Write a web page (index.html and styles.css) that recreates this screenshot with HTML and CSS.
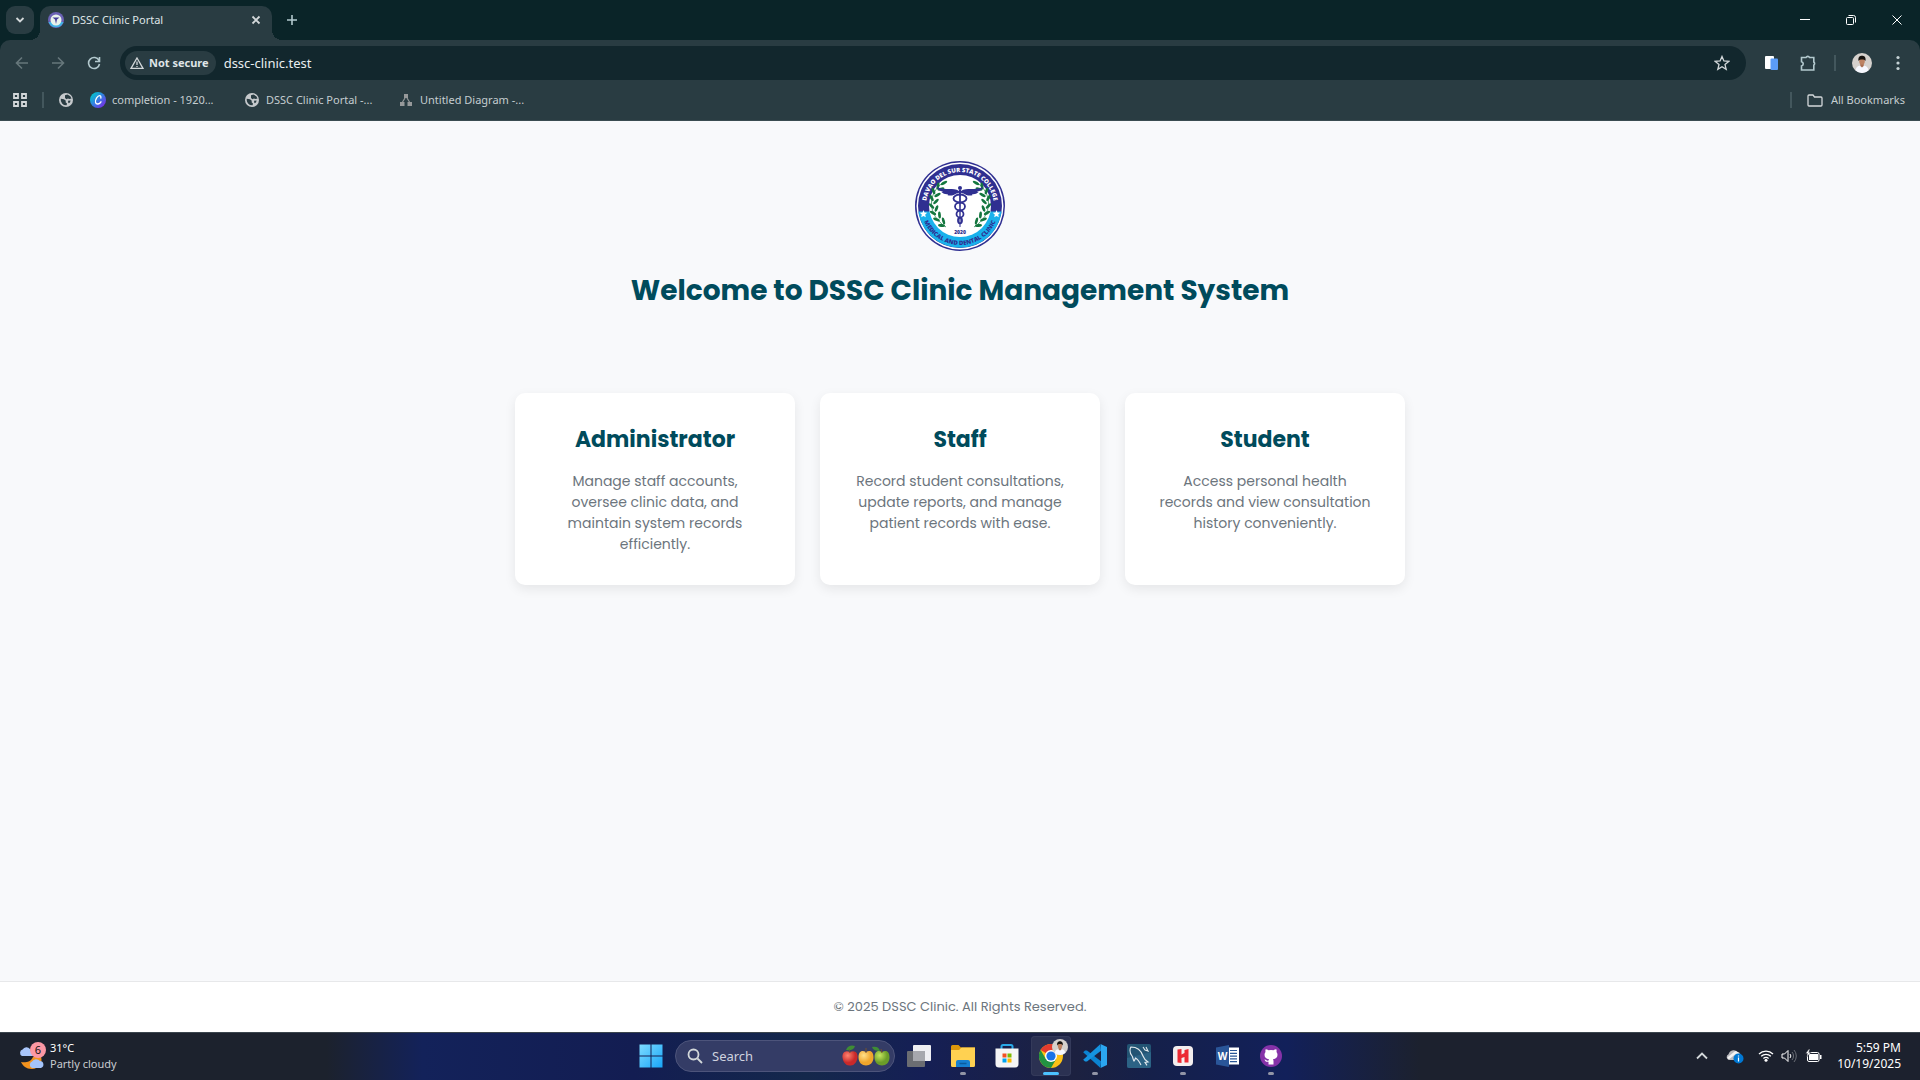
FILE: index.html
```html
<!DOCTYPE html>
<html lang="en">
<head>
<meta charset="utf-8">
<meta name="viewport" content="width=device-width, initial-scale=1">
<title>DSSC Clinic Portal</title>
<link rel="stylesheet" href="styles.css">
</head>
<body>
<svg class="defs" aria-hidden="true">
  <defs>
    <symbol id="globe" viewBox="0 0 14 14">
      <circle cx="7" cy="7" r="7" fill="#c5c9cc"/>
      <path d="M1.800 5.800 5 6.200 6.800 7.800 6.600 9.200 8 10.400 7.600 12.300A5.500 5.500 0 0 1 1.800 5.800ZM6 2.200l2.500-.6 2.800 1.600 1.200 2.200L10.500 6l-1.600-.6L7.500 6.200 6 5Z" fill="#293c42"/>
      <path d="M9 7.800l2.600-.4-.6 2.200-1.600.6Z" fill="#293c42"/>
    </symbol>
    <symbol id="person" viewBox="0 0 20 20">
      <circle cx="10" cy="10" r="10" fill="#d5d1cd"/>
      <path d="M3.500 17.500c.5-4 3-5 6.500-5s6 1 6.500 5A10 10 0 0 1 3.500 17.500Z" fill="#f6f8ff"/>
      <path d="M8.300 10h3.400v3L10 14.500 8.300 13Z" fill="#a96d50"/>
      <ellipse cx="10" cy="8" rx="2.800" ry="3.800" fill="#bd8262"/>
      <path d="M6.500 8C5.800 4 8 2.800 10 2.800S14.200 4 13.500 8C12.800 6.800 11.500 6.400 10 6.400S7.200 6.800 6.500 8Z" fill="#17130f"/>
    </symbol>
  </defs>
</svg>

<header class="browser">
  <div class="tab-strip">
    <button class="tab-search" aria-label="Search tabs">
      <svg width="10" height="10" viewBox="0 0 10 10"><path d="M1.500 3 5 6.500 8.500 3" class="line bold"/></svg>
    </button>
    <div class="tab">
      <svg width="16" height="16" viewBox="0 0 16 16"><circle cx="8" cy="8" r="8" fill="#6b62b5"/><path d="M0.500 10A8 8 0 0 0 15.500 10Z" fill="#3fb3e6"/><circle cx="8" cy="8" r="5.500" fill="#e8f3ec"/><path d="M4.500 5.500h7L9 7.500 8 12 7 7.500Z" fill="#453d9b"/></svg>
      <span class="tab-title">DSSC Clinic Portal</span>
      <button class="icon-button tab-close" aria-label="Close tab"><svg width="10" height="10" viewBox="0 0 10 10"><path d="M1.500 1.500l7 7M8.500 1.500l-7 7" class="line bold"/></svg></button>
    </div>
    <button class="icon-button new-tab" aria-label="New tab"><svg width="12" height="12" viewBox="0 0 12 12"><path d="M6 1v10M1 6h10" class="line tint"/></svg></button>
    <div class="window-controls">
      <button aria-label="Minimize"><svg width="10" height="10" viewBox="0 0 10 10"><path d="M0 4.500h10" class="line thin"/></svg></button>
      <button aria-label="Restore"><svg width="10" height="10" viewBox="0 0 10 10"><rect x=".5" y="2.500" width="7" height="7" rx="1" class="line thin"/><path d="M2.500.5H7.500A2 2 0 0 1 9.500 2.500V7.500" class="line thin"/></svg></button>
      <button aria-label="Close"><svg width="10" height="10" viewBox="0 0 10 10"><path d="M.5.5l9 9M9.500.5l-9 9" class="line thin"/></svg></button>
    </div>
  </div>

  <div class="toolbar">
    <nav class="history" aria-label="History">
      <button class="icon-button" aria-label="Back" disabled><svg width="14" height="14" viewBox="0 0 14 14"><path d="M13 7H1.500M7 1.500 1.500 7 7 12.500" class="line muted"/></svg></button>
      <button class="icon-button" aria-label="Forward" disabled><svg width="14" height="14" viewBox="0 0 14 14"><path d="M1 7h11.500M7 1.500 12.500 7 7 12.500" class="line muted"/></svg></button>
      <button class="icon-button" aria-label="Reload"><svg width="14" height="14" viewBox="0 0 14 14"><path d="M12 4.500A5.500 5.500 0 1 0 12.500 8M12.500 1v4.500H8" class="line tint"/></svg></button>
    </nav>
    <div class="address">
      <button class="security"><svg width="14" height="12" viewBox="0 0 14 12"><path d="M7 1 13 11.300H1Z" class="line"/><path d="M7 4.500v3.500M7 9v1" class="line"/></svg>Not secure</button>
      <input class="url" type="text" aria-label="Address" value="dssc-clinic.test">
      <button class="icon-button" aria-label="Bookmark this tab"><svg width="16" height="16" viewBox="0 0 16 16"><path d="M8 1.500 9.900 6l4.800.4-3.700 3.200 1.200 4.800L8 11.800l-4.200 2.600L5 9.600 1.300 6.400 6.100 6Z" class="line"/></svg></button>
    </div>
    <div class="extensions">
      <button class="icon-button" aria-label="Reader extension"><svg width="14" height="16" viewBox="0 0 14 16"><rect x="0" y="1" width="9" height="13" rx="1" fill="#fff"/><rect x="5.500" y="3.500" width="7.500" height="11.500" rx="1" fill="#5b9cf8"/></svg></button>
      <button class="icon-button" aria-label="Extensions"><svg width="17" height="17" viewBox="0 0 17 17"><path d="M1.500 2.500H6a2 2 0 0 1 3.600 0h4.200V7a2 2 0 0 1 0 3.200v4.800H1.500v-4a2.200 2.200 0 0 0 0-4.300Z" class="line tint"/></svg></button>
      <span class="divider"></span>
      <button class="icon-button profile" aria-label="Profile"><svg width="20" height="20"><use href="#person"/></svg></button>
      <button class="icon-button" aria-label="Menu"><svg width="4" height="16" viewBox="0 0 4 16" fill="#c5d2d5"><circle cx="2" cy="2.500" r="1.600"/><circle cx="2" cy="8" r="1.600"/><circle cx="2" cy="13.500" r="1.600"/></svg></button>
    </div>
  </div>

  <nav class="bookmarks" aria-label="Bookmarks">
    <button class="icon-button apps" aria-label="Apps"><svg width="14" height="14" viewBox="0 0 14 14"><path d="M1 1h4v4H1ZM9 1h4v4H9ZM1 9h4v4H1ZM9 9h4v4H9Z" class="line bold"/></svg></button>
    <span class="divider"></span>
    <a class="bookmark plain" href="#" aria-label="Website"><svg width="14" height="14"><use href="#globe"/></svg></a>
    <a class="bookmark completion" href="#"><svg width="16" height="16" viewBox="0 0 16 16"><defs><linearGradient id="canva" x1="0" y1="0" x2="1" y2="1"><stop offset=".15" stop-color="#06bfcf"/><stop offset=".55" stop-color="#3e73e4"/><stop offset=".9" stop-color="#7b2be5"/></linearGradient></defs><circle cx="8" cy="8" r="8" fill="url(#canva)"/><path d="M10.800 6C11.500 3 8.500 2.800 6.500 6.200S5.500 12.300 8 12c1.400-.2 2.300-1 3-2.200" fill="none" stroke="#fff" stroke-width="1.300" stroke-linecap="round"/></svg>completion - 1920...</a>
    <a class="bookmark portal" href="#"><svg width="14" height="14"><use href="#globe"/></svg>DSSC Clinic Portal -...</a>
    <a class="bookmark diagram" href="#"><svg width="12" height="12" viewBox="0 0 12 12" fill="#96999a"><rect x="4" y="0" width="4" height="4"/><rect x="0" y="8" width="4.500" height="4"/><rect x="7.500" y="8" width="4.500" height="4"/><path d="M5 4 2.500 8M7 4 9.500 8" stroke="#96999a" stroke-width="1.200"/></svg>Untitled Diagram -...</a>
    <span class="divider last"></span>
    <a class="bookmark all" href="#"><svg width="16" height="13" viewBox="0 0 16 13"><path d="M1 2a1 1 0 0 1 1-1h4l1.500 2H14a1 1 0 0 1 1 1v7a1 1 0 0 1-1 1H2a1 1 0 0 1-1-1Z" class="line"/></svg>All Bookmarks</a>
  </nav>
</header>

<main class="page">
  <div class="hero">
    <svg class="seal" viewBox="0 0 90 90" role="img" aria-label="Davao del Sur State College Medical and Dental Clinic">
      <defs>
        <path id="arc-top" d="M19 66.900A34 34 0 1 1 71 66.900"/>
        <path id="arc-bottom" d="M6 45A39 39 0 0 0 84 45"/>
        <g id="laurel" fill="#14773f">
          <path d="M29 21C12 32 12 54 31 66" fill="none" stroke="#14773f" stroke-width=".7"/>
          <ellipse cx="29" cy="22" rx="3.600" ry="1.300" transform="rotate(-30 29 22)"/>
          <ellipse cx="23" cy="25" rx="3.500" ry="1.400" transform="rotate(-80 23 25)"/>
          <ellipse cx="26" cy="28" rx="3.500" ry="1.400" transform="rotate(-15 26 28)"/>
          <ellipse cx="18.500" cy="30" rx="3.500" ry="1.400" transform="rotate(70 18.500 30)"/>
          <ellipse cx="22.500" cy="34" rx="3.500" ry="1.400" transform="rotate(-30 22.500 34)"/>
          <ellipse cx="16.500" cy="37" rx="3.500" ry="1.400" transform="rotate(60 16.500 37)"/>
          <ellipse cx="21" cy="40.500" rx="3.500" ry="1.400" transform="rotate(-45 21 40.500)"/>
          <ellipse cx="16.500" cy="45" rx="3.500" ry="1.400" transform="rotate(45 16.500 45)"/>
          <ellipse cx="21.500" cy="47.500" rx="3.500" ry="1.400" transform="rotate(-70 21.500 47.500)"/>
          <ellipse cx="18" cy="52" rx="3.500" ry="1.400" transform="rotate(30 18 52)"/>
          <ellipse cx="24.500" cy="54" rx="3.500" ry="1.400" transform="rotate(-95 24.500 54)"/>
          <ellipse cx="21.500" cy="58.500" rx="3.500" ry="1.400" transform="rotate(20 21.500 58.500)"/>
          <ellipse cx="28.500" cy="60" rx="3.500" ry="1.400" transform="rotate(75 28.500 60)"/>
          <ellipse cx="26.500" cy="64.500" rx="3.500" ry="1.400" transform="rotate(10 26.500 64.500)"/>
        </g>
      </defs>
      <circle cx="45" cy="45" r="45" fill="#2f2f91"/>
      <circle cx="45" cy="45" r="43.500" fill="#fff"/>
      <circle cx="45" cy="45" r="42" fill="#2f2f91"/>
      <path d="M3.400 50.500A42 42 0 0 0 86.600 50.500Z" fill="#19b1ec"/>
      <circle cx="45" cy="45" r="31" fill="#fff"/>
      <path class="star" d="m8.500 49 1 2.600 2.800.2-2.100 1.800.6 2.700-2.300-1.400-2.300 1.400.6-2.700-2.100-1.800 2.800-.2Z"/>
      <path class="star" d="m81.500 49 1 2.600 2.800.2-2.100 1.800.6 2.700-2.300-1.400-2.300 1.400.6-2.700-2.100-1.800 2.800-.2Z"/>
      <text class="seal-name"><textPath href="#arc-top" startOffset="50%">DAVAO DEL SUR STATE COLLEGE</textPath></text>
      <text class="seal-unit"><textPath href="#arc-bottom" startOffset="50%">MEDICAL AND DENTAL CLINIC</textPath></text>
      <use href="#laurel"/>
      <use href="#laurel" transform="translate(90 0) scale(-1 1)"/>
      <g fill="#2f2f91">
        <path d="M44 30C38 26 31 30 22 26c1 3 4 4.500 6 4.500-.6.500-1.500.5-1.500.5 2 2 4.500 2.400 6.500 2l-.8 1c3 1.200 6.800.4 9.300-1.500L45 31.500l3.500 1C51 34.400 54.800 35.200 57.800 34l-.8-1c2 .4 4.500 0 6.500-2 0 0-.9 0-1.500-.5 2 0 5-1.500 6-4.500-9 4-16 0-22 4Z"/>
        <circle cx="45" cy="27" r="2"/>
        <path d="M44 29h2l-.5 37h-1Z"/>
      </g>
      <g fill="none" stroke="#2f2f91" stroke-width="1.800">
        <ellipse cx="45" cy="37.500" rx="6.500" ry="4"/>
        <ellipse cx="45" cy="45.500" rx="5" ry="3.800"/>
        <ellipse cx="45" cy="53" rx="3.500" ry="3.500"/>
        <ellipse cx="45" cy="59.500" rx="2" ry="2.800"/>
      </g>
      <text class="seal-year" x="45" y="72.500">2020</text>
    </svg>
    <h1>Welcome to DSSC Clinic Management System</h1>
  </div>
  <div class="cards">
    <section class="card"><h2>Administrator</h2><p>Manage staff accounts, oversee clinic data, and maintain system records efficiently.</p></section>
    <section class="card"><h2>Staff</h2><p>Record student consultations, update reports, and manage patient records with ease.</p></section>
    <section class="card"><h2>Student</h2><p>Access personal health records and view consultation history conveniently.</p></section>
  </div>
</main>

<footer class="site-footer">© 2025 DSSC Clinic. All Rights Reserved.</footer>

<div class="taskbar">
  <button class="weather">
    <svg width="28" height="28" viewBox="0 0 28 28">
      <path d="M3 20c4 1 10 0 12-5h8c2 5-2 12-9 12C8 27 5 24 3 20Z" fill="#f3931e"/>
      <path d="M4 14a3.500 3.500 0 0 1 .6-6.500A4.500 4.500 0 0 1 12 7l3 7Z" fill="#a9c6fa"/>
      <path d="M14 26a3.500 3.500 0 0 1 0-6.500 5 5 0 0 1 8-.5 3.600 3.600 0 0 1 1 7Z" fill="#a4c4fb"/>
      <circle cx="20" cy="8" r="8" fill="#fb98a3"/>
      <text class="badge-count" x="20" y="12">6</text>
    </svg>
    <span><span class="temperature">31°C</span><br>Partly cloudy</span>
  </button>

  <div class="apps-row">
    <button class="app" aria-label="Start"><svg width="24" height="24" viewBox="0 0 24 24"><defs><linearGradient id="win" x1="0" y1="0" x2="1" y2="1"><stop stop-color="#7edcff"/><stop offset="1" stop-color="#18a5f8"/></linearGradient></defs><path d="M.5.500h11v11H.5ZM12.500.5h11v11h-11ZM.5 12.500h11v11H.5ZM12.500 12.500h11v11h-11Z" fill="url(#win)"/></svg></button>
    <label class="search">
      <svg width="16" height="16" viewBox="0 0 16 16"><circle cx="6.500" cy="6.500" r="5" class="line bold"/><path d="m10.500 10.500 4.500 4.500" class="line bold"/></svg>
      <input type="text" placeholder="Search" aria-label="Search">
      <svg width="48" height="22" viewBox="0 0 48 22">
        <defs>
          <radialGradient id="red" cx=".35" cy=".3"><stop stop-color="#ff8370"/><stop offset="1" stop-color="#c9292a"/></radialGradient>
          <radialGradient id="yellow" cx=".35" cy=".3"><stop stop-color="#ffe08a"/><stop offset="1" stop-color="#f0a52b"/></radialGradient>
          <radialGradient id="green" cx=".35" cy=".3"><stop stop-color="#c5e65e"/><stop offset="1" stop-color="#6b9d28"/></radialGradient>
        </defs>
        <path d="M8 7C3 4.500 0 8 .5 12.500S4 21 8 20.500c4 .5 7-3.500 7.500-8S13 4.500 8 7Z" fill="url(#red)"/>
        <path d="M24 7c-5-2.500-7.500.500-7.500 5.500S20 20.500 24 20.500s7.500-3 7.500-8S29 4.500 24 7Z" fill="url(#yellow)"/>
        <path d="M40 7c-5-2.500-7.500.500-7.500 5.500S36 20.500 40 20.500s7.500-3 7.500-8S45 4.500 40 7Z" fill="url(#green)"/>
        <path d="M4 5C6 0 10 0 13 1c-1 4-5 5-9 4ZM30 2c4-1 7 0 8 4-4 0-7-1-8-4Z" fill="#3f8c35"/>
        <path d="m8 8-.6-3.500M24 8V3M40 8l-1-4" stroke="#74502a" fill="none"/>
      </svg>
    </label>
    <button class="app" aria-label="Task view"><svg width="24" height="22" viewBox="0 0 24 22"><rect y="6" width="18" height="16" rx="1" fill="#6b6d72"/><rect x="6" width="18" height="16" rx="1" fill="#eeeef2"/><path d="M6 6h12v10H6Z" fill="#a6a7ad"/></svg></button>
    <button class="app running" aria-label="File Explorer"><svg width="24" height="22" viewBox="0 0 24 22"><path d="M0 1.500A1.500 1.500 0 0 1 1.500 0h6L10 2.500h14V8H0Z" fill="#dd970b"/><path d="M0 5h8l2.500-2.500H24V20.500a1.500 1.500 0 0 1-1.500 1.500h-21A1.500 1.500 0 0 1 0 20.500Z" fill="#ffd151"/><path d="M5 22v-5a2 2 0 0 1 2-2h10a2 2 0 0 1 2 2v5Z" fill="#1680d1"/><path d="M8.500 18.500h7" stroke="#0b5c9e" stroke-width="1.500"/></svg></button>
    <button class="app" aria-label="Microsoft Store"><svg width="24" height="24" viewBox="0 0 24 24"><path d="M6.500 5V2.500a1.500 1.500 0 0 1 1.500-1.500h8a1.500 1.500 0 0 1 1.500 1.500V5" fill="none" stroke="#29a9e8" stroke-width="2"/><path d="M.5 4.500h23V20a3.500 3.500 0 0 1-3.500 3.500H4A3.500 3.500 0 0 1 .5 20Z" fill="#f5f5f5"/><path d="M7.500 9.500h4v4h-4Z" fill="#f25022"/><path d="M12.500 9.500h4v4h-4Z" fill="#7fba00"/><path d="M7.500 14.500h4v4h-4Z" fill="#00a4ef"/><path d="M12.500 14.500h4v4h-4Z" fill="#ffb900"/></svg></button>
    <button class="app running active" aria-label="Google Chrome">
      <svg width="24" height="24" viewBox="0 0 24 24"><circle cx="12" cy="12" r="12" fill="#fbc116"/><path d="M12 12 1.600 6A12 12 0 0 1 22.400 6H12Z" fill="#e33b2e"/><path d="M1.600 6A12 12 0 0 0 12 24l5.200-9L12 12 6.800 15Z" fill="#229342"/><circle cx="12" cy="12" r="6" fill="#fff"/><circle cx="12" cy="12" r="4.600" fill="#1a73e8"/></svg>
      <svg class="app-badge" width="16" height="16" viewBox="0 0 20 20"><use href="#person" width="20" height="20"/></svg>
    </button>
    <button class="app running" aria-label="Visual Studio Code"><svg width="24" height="24" viewBox="0 0 24 24"><path d="M.2 8.200 2 6.500 4 6.600 18 17.300 17.500 24Z" fill="#0b83d1"/><path d="M.2 15.800 17.500 0 18 6.700 4 17.400l-2 .1Z" fill="#1593e0"/><path d="m17.500 0 6.500 3v18l-6.500 3c.4-.4.5-.7.5-1.200V1.200c0-.5-.1-.8-.5-1.200Z" fill="#2ba6f0"/></svg></button>
    <button class="app" aria-label="MySQL Workbench"><svg width="24" height="24" viewBox="0 0 24 24"><rect width="24" height="24" rx="2" fill="#225473"/><path d="M0 14 24 8v14a2 2 0 0 1-2 2H2a2 2 0 0 1-2-2Z" fill="#2c6385"/><path d="M5 12C2 8 3 4 4 3c5 0 10 3 12 9 1 3 2 4 5 6l-3 .4 2 3M5 12c1 1 1 4 2 5 1-1 1-2 1.500-3 2 1 4 4 5.500 7M16 3l2 3 3 1-2-4" fill="none" stroke="#e2e9ee" stroke-width="1.100"/></svg></button>
    <button class="app running" aria-label="HeidiSQL"><svg width="20" height="20" viewBox="0 0 20 20"><rect width="20" height="20" rx="4" fill="#f3eeee"/><path d="M4.500 3.500 8.500 3v5.500l3-1.500V4L15.500 3v13.500h-4V11l-3 1v5l-4-.5Z" fill="#ec2932"/></svg></button>
    <button class="app" aria-label="Word"><svg width="23" height="22" viewBox="0 0 23 22"><path d="M12 2.500h11v17H12Z" fill="#fff"/><path d="M14 5.500h7M14 8.300h7M14 11.100h7M14 13.900h7M14 16.700h7" stroke="#2b5797" stroke-width="1.200"/><path d="M0 2.500 13 0v22L0 19.500Z" fill="#2a5699"/><text class="word-letter" x="6.500" y="14.500">W</text></svg></button>
    <button class="app running" aria-label="GitHub Desktop"><svg width="22" height="22" viewBox="0 0 22 22"><circle cx="11" cy="11" r="11" fill="#8532a8"/><path d="M8.500 19.500v-2.800c-3 .6-3.500-1.200-4-2 1.500-.5 1.800 1.600 4 .8l.5-1.300c-3-.4-4.500-1.800-4.500-4.500 0-1.200.4-2.100 1-2.800-.2-.8-.2-1.700.2-2.700 1 0 2 .5 2.800 1.100a9 9 0 0 1 5 0c.8-.6 1.800-1.100 2.800-1.100.4 1 .4 1.900.2 2.700.6.7 1 1.600 1 2.800 0 2.700-1.500 4.100-4.500 4.500.4.600.5 1.200.5 2v3.300Z" fill="#fff"/></svg></button>
  </div>

  <div class="tray">
    <button class="icon-button" aria-label="Show hidden icons"><svg width="12" height="8" viewBox="0 0 12 8"><path d="M1 6.500 6 1.500l5 5" class="line bold"/></svg></button>
    <button class="icon-button cloud" aria-label="OneDrive"><svg width="18" height="16" viewBox="0 0 18 16"><path d="M3 12A3 3 0 0 1 2.500 6.300 5.500 5.500 0 0 1 12.500 5c2 .4 3 2 3 4l-4 3Z" fill="#b9b9bd"/><path d="M2 10.500 9.500 4.500 13 6" stroke="#f3f3f3" stroke-width="2.500" fill="none"/><circle cx="12.500" cy="10.500" r="5" fill="#0078d4"/><path d="M12.500 9.500v4M12.500 7.500v1" stroke="#fff" stroke-width="1.200"/></svg></button>
    <button class="system" aria-label="Network, sound and battery">
      <svg width="16" height="13" viewBox="0 0 16 13"><path d="M1 5a10 10 0 0 1 14 0M3.200 7.300a7 7 0 0 1 9.600 0M5.400 9.500a4 4 0 0 1 5.200 0" class="line wifi"/><circle cx="8" cy="11.300" r="1.500" fill="#fff"/></svg>
      <svg width="17" height="14" viewBox="0 0 17 14"><path d="M1 5h2.500L7 1.500v11L3.500 9H1Z" class="line thin"/><path d="M9 5a3 3 0 0 1 0 4" class="line thin"/><path d="M11 3a6 6 0 0 1 0 8M13 1a9 9 0 0 1 0 12" class="line faint"/></svg>
      <svg width="17" height="14" viewBox="0 0 17 14"><rect x="2.500" y="3.500" width="11.500" height="9" rx="1.500" class="line thin"/><path d="M4 5h9v6H4ZM15 6h1.500v4H15Z" fill="#fff"/><path d="M4 0 .5 4.500h2L1.500 8 6 3.500H3.800L5 0Z" fill="#fff" stroke="#1c212e" stroke-width=".5"/></svg>
    </button>
    <button class="clock">5:59 PM<br>10/19/2025</button>
  </div>
</div>
</body>
</html>
```
FILE: styles.css
```css
* {
  box-sizing: border-box;
}

body {
  margin: 0;
  min-height: 100vh;
  display: flex;
  flex-direction: column;
  background: #f8f9fb;
  font-family: Poppins, Inter, "Noto Sans", sans-serif;
}

h1, h2, p {
  margin: 0;
}

button, input {
  border: 0;
  padding: 0;
  background: none;
  color: inherit;
  font: inherit;
}

a {
  color: inherit;
  text-decoration: none;
}

svg {
  display: block;
  flex: none;
}

.defs {
  position: absolute;
  width: 0;
  height: 0;
}

.line {
  fill: none;
  stroke: #d3d8da;
  stroke-width: 1.3;
}

.line.bold { stroke-width: 1.8; }
.line.thin { stroke: #fff; stroke-width: 1; }
.line.wifi { stroke: #fff; }
.line.tint { stroke: #b3c9ce; stroke-width: 1.6; }
.line.muted { stroke: #66777b; stroke-width: 1.6; }
.line.faint { stroke: #6a6e76; stroke-width: 1; }

.icon-button {
  display: flex;
  align-items: center;
  justify-content: center;
  flex: none;
}

.divider {
  width: 2px;
  height: 16px;
  background: #43575d;
}

/* Browser window */
.browser {
  background: #0a2428;
  color: #dfe5e7;
  font: 12px/16px "Segoe UI", "Noto Sans", sans-serif;
}

.tab-strip {
  height: 40px;
  display: flex;
  align-items: center;
  padding-left: 6px;
}

.tab-search {
  width: 28px;
  height: 28px;
  display: grid;
  place-items: center;
  border-radius: 9px;
  background: #293c42;
}

.tab {
  position: relative;
  align-self: flex-end;
  width: 232px;
  height: 34px;
  margin-left: 6px;
  padding: 0 11px 6px 8px;
  display: flex;
  align-items: center;
  gap: 8px;
  border-radius: 10px 10px 0 0;
  background: #293c42;
}

.tab::before,
.tab::after {
  content: "";
  position: absolute;
  bottom: 0;
  width: 10px;
  height: 10px;
}

.tab::before {
  right: 100%;
  background: radial-gradient(circle at 0 0, transparent 10px, #293c42 10px);
}

.tab::after {
  left: 100%;
  background: radial-gradient(circle at 100% 0, transparent 10px, #293c42 10px);
}

.tab-title {
  flex: 1;
  font-size: 11px;
}

.new-tab {
  width: 28px;
  height: 28px;
  margin-left: 6px;
}

.window-controls {
  display: flex;
  margin-left: auto;
}

.window-controls button {
  width: 46px;
  height: 40px;
  display: grid;
  place-items: center;
}

.toolbar {
  display: flex;
  align-items: center;
  height: 46px;
  padding: 0 4px;
  border-radius: 10px 10px 0 0;
  background: #293c42;
}

.history {
  display: flex;
  margin-right: 8px;
}

.history .icon-button {
  width: 36px;
  height: 34px;
}

.address {
  flex: 1;
  height: 34px;
  display: flex;
  align-items: center;
  padding: 0 16px 0 5px;
  border-radius: 17px;
  background: #12272d;
}

.security {
  height: 24px;
  display: flex;
  align-items: center;
  gap: 5px;
  padding: 0 7px 0 5px;
  border-radius: 12px;
  background: #293c42;
  font-size: 11px;
  font-weight: 700;
}

.url {
  flex: 1;
  min-width: 0;
  margin-left: 8px;
  color: #e8eef0;
  font-size: 13px;
}

.extensions {
  display: flex;
  align-items: center;
  margin-left: 8px;
}

.extensions .icon-button {
  width: 36px;
  height: 34px;
}

.extensions .divider {
  margin: 0 8px;
}

.bookmarks {
  display: flex;
  align-items: center;
  height: 35px;
  padding: 0 15px 6px 13px;
  border-bottom: 1px solid #3a4c51;
  background: #293c42;
  color: #c5cdd0;
  font-size: 11px;
}

.bookmark {
  display: flex;
  align-items: center;
  gap: 7px;
  white-space: nowrap;
}

.bookmarks .divider {
  margin: 0 15px;
}

.bookmark.completion {
  width: 139px;
  gap: 6px;
  margin: 0 16px 0 17px;
}

.bookmark.portal {
  width: 139px;
  margin-right: 16px;
}

.bookmark.diagram,
.bookmark.all {
  gap: 8px;
}

.bookmarks .divider.last {
  margin-left: auto;
}

/* Clinic page */
.page {
  flex: 1;
  display: flex;
  flex-direction: column;
  align-items: center;
  padding: 40px 20px;
}

.hero {
  display: flex;
  flex-direction: column;
  align-items: center;
  gap: 19px;
  text-align: center;
}

.seal {
  width: 90px;
  height: 90px;
}

.seal text {
  font-family: "Open Sans", sans-serif;
  font-weight: 800;
  text-anchor: middle;
}

.seal-name {
  fill: #fff;
  font-size: 6px;
}

.seal-unit {
  fill: #2f2f91;
  font-size: 6px;
}

.seal-year {
  fill: #2f2f91;
  font-size: 5px;
}

.star {
  fill: #fff;
}

h1 {
  color: #004b5c;
  font-size: 28px;
  line-height: 42px;
  font-weight: 700;
}

.cards {
  display: flex;
  flex-wrap: wrap;
  justify-content: center;
  gap: 25px;
  margin-top: 81px;
}

.card {
  width: 280px;
  padding: 30px;
  border-radius: 10px;
  background: #fff;
  box-shadow: 0 4px 12px rgb(0 0 0 / 8%);
  text-align: center;
}

.card h2 {
  margin-bottom: 15px;
  color: #004b5c;
  font-size: 22px;
  line-height: 33px;
  font-weight: 700;
}

.card p {
  color: #6c757d;
  font-size: 14px;
  line-height: 21px;
}

.site-footer {
  padding: 15px;
  border-top: 1px solid #e7e8ea;
  background: #fff;
  color: #6c757d;
  font-size: 13px;
  line-height: 20px;
  text-align: center;
}

/* Desktop taskbar */
.taskbar {
  height: 48px;
  display: grid;
  grid-template-columns: 1fr auto 1fr;
  align-items: center;
  padding: 0 0 2px 2px;
  border-top: 1px solid #3b454d;
  background: linear-gradient(90deg, #1c222d 17%, #13225a 22%, #131d52 33%, #14284b 42%, #151f55 48%, #1c2140 56%, #15204a 60%, #12205a 67%, #1c212e 74%);
  color: #fff;
  font: 12px/16px "Segoe UI", "Noto Sans", sans-serif;
}

.weather {
  justify-self: start;
  display: flex;
  align-items: center;
  gap: 4px;
  padding-left: 16px;
  color: #c9ccd0;
  font-size: 11px;
  text-align: left;
}

.temperature {
  color: #fff;
}

.badge-count {
  fill: #111;
  font-size: 11px;
  text-anchor: middle;
}

.apps-row {
  display: flex;
  align-items: center;
  gap: 4px;
}

.app {
  position: relative;
  width: 40px;
  height: 40px;
  display: grid;
  place-items: center;
  border-radius: 4px;
}

.active {
  background: #2b3152;
  box-shadow: inset 0 0 0 1px #343a5a;
}

.running::after {
  content: "";
  position: absolute;
  left: 17px;
  bottom: 1px;
  width: 6px;
  height: 3px;
  border-radius: 2px;
  background: #9295a6;
}

.running.active::after {
  left: 12px;
  width: 16px;
  background: #4cc2ff;
}

.app-badge {
  position: absolute;
  top: 3px;
  right: 3px;
}

.search {
  width: 220px;
  height: 32px;
  display: flex;
  align-items: center;
  gap: 9px;
  padding: 0 4px 0 11px;
  border: 1px solid #4d547b;
  border-radius: 16px;
  background: #343c66;
}

.search input {
  flex: 1;
  min-width: 0;
  font-size: 13px;
}

.search input::placeholder {
  color: #cfd2df;
  opacity: 1;
}

.word-letter {
  fill: #fff;
  font-size: 10px;
  font-weight: 700;
  text-anchor: middle;
}

.tray {
  justify-self: end;
  display: flex;
  align-items: center;
  padding-right: 19px;
}

.cloud {
  margin-left: 18px;
}

.system {
  display: flex;
  align-items: center;
  gap: 7px;
  margin-left: 14px;
}

.clock {
  margin-left: 15px;
  font-size: 12px;
  text-align: right;
}
```
